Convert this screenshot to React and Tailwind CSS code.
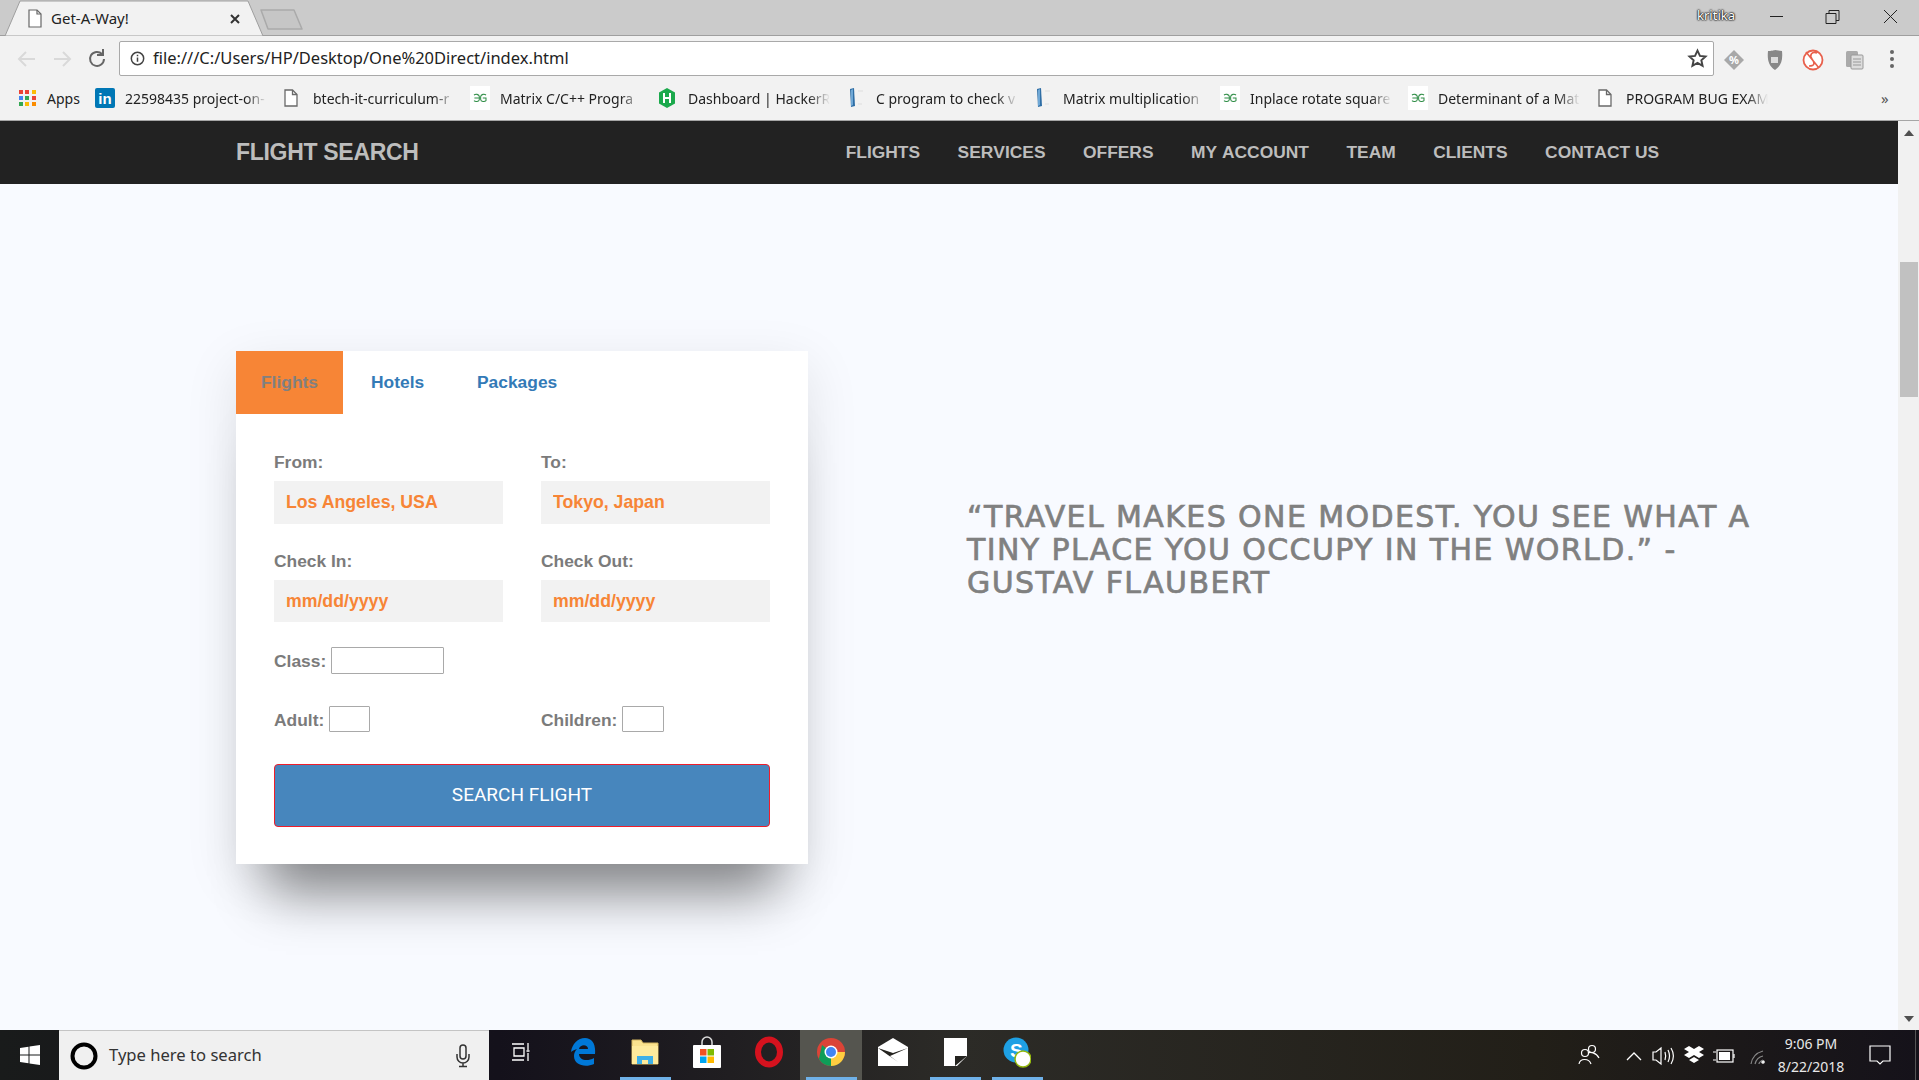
import React from "react";

const ui = { fontFamily: '"Noto Sans", "Open Sans", sans-serif' };

function Doc({ className = "" }) {
  return (
    <svg viewBox="0 0 14 18" className={className} fill="none" stroke="#6a6a6a" strokeWidth="1.3">
      <path d="M1 1h7.5L13 5.5V17H1z" fill="#fff" />
      <path d="M8.5 1v4.5H13" />
    </svg>
  );
}

function GG() {
  return (
    <div className="w-[20px] h-[24px] bg-white flex items-center justify-center shrink-0">
      <svg viewBox="0 0 20 12" className="w-[16px] h-[10px]" fill="none" stroke="#2f8d46" strokeWidth="1.3">
        <path d="M2.500 2.500C4 .8 9 .8 9.200 4.500v3C9 11 4 11 2.500 9.300M3 6h6.200" />
        <path d="M17.500 2.500C16 .8 11 .8 10.800 4.500v3c.2 3.500 5.200 3.500 6.700 1.800V6h-4" />
      </svg>
    </div>
  );
}

function AppsIcon() {
  const c = ["#ea4335", "#ea4335", "#fbbc05", "#4285f4", "#34a853", "#ea4335", "#34a853", "#fbbc05", "#fb8c00"];
  return (
    <div className="grid grid-cols-3 gap-[2px] w-[17px] h-[17px] shrink-0">
      {c.map((k, i) => (
        <div key={i} style={{ background: k }} className="w-[4px] h-[4px]" />
      ))}
    </div>
  );
}

function LinkedIn() {
  return (
    <div className="w-[20px] h-[20px] rounded-[2px] bg-[#0077b5] flex items-end justify-center shrink-0 text-white font-bold text-[15px] leading-[18px]" style={{ fontFamily: '"Liberation Sans", sans-serif' }}>
      in
    </div>
  );
}

function HR() {
  return (
    <svg viewBox="0 0 18 20" className="w-[18px] h-[20px] shrink-0">
      <path d="M9 0l8 4.5v11L9 20l-8-4.5v-11z" fill="#1ba94c" />
      <path d="M6 5v10M12 5v10M6 10h6" stroke="#fff" strokeWidth="2" />
    </svg>
  );
}

function Blur() {
  return (
    <svg viewBox="0 0 18 24" className="w-[18px] h-[24px] shrink-0">
      <path d="M4 3l4-1 1 18-4 1z" fill="#2f6ea5" />
      <path d="M5 4l2-1v16l-2 1z" fill="#6fa8d6" />
      <path d="M12 5h5M12 18h4" stroke="#e8e8e8" strokeWidth="2" />
    </svg>
  );
}

function Bookmark({ icon, text, w, iconW = 30 }) {
  return (
    <div className="flex items-center shrink-0" style={{ width: w }}>
      <div className="flex items-center shrink-0" style={{ width: iconW }}>{icon}</div>
      <span className="w-[142px] whitespace-nowrap overflow-hidden text-[14px] text-[#222] [mask-image:linear-gradient(to_right,black_85%,transparent_100%)]">
        {text}
      </span>
    </div>
  );
}

function Browser() {
  return (
    <header style={ui} className="shrink-0">
      {/* tab strip */}
      <div className="h-[36px] bg-[#cbcbcb] border-b border-[#9f9f9f] flex items-start">
        <svg viewBox="0 0 310 36" className="w-[310px] h-[36px] shrink-0">
          <path d="M5 36L20 1h228l15 35z" fill="#f2f2f2" stroke="#9f9f9f" />
          <path d="M261 10h33l8 19h-34z" fill="#c6c6c6" stroke="#aaaaaa" strokeWidth="1.5" strokeLinejoin="round" />
          <path d="M29 10h8l4 4v13H29z" fill="#fff" stroke="#666" strokeWidth="1.2" />
          <path d="M37 10v4h4" fill="none" stroke="#666" strokeWidth="1.2" />
          <path d="M231 15l8 8M239 15l-8 8" stroke="#333" strokeWidth="2" />
        </svg>
        <span className="-ml-[259px] mt-[8px] text-[15px] leading-[20px] text-[#222]">Get-A-Way!</span>
        <div className="ml-auto flex items-center h-[32px]">
          <span className="text-[13px] text-white [text-shadow:0_0_2px_#000,0_0_2px_#000,0_0_1px_#000]">kritika</span>
          <svg viewBox="0 0 184 32" className="w-[184px] h-[32px]" fill="none" stroke="#222" strokeWidth="1">
            <path d="M35 16.5h13" />
            <path d="M91 13.500h10v10H91zM94 13.500v-3h10v10h-3" />
            <path d="M149 10l13 13M162 10l-13 13" />
          </svg>
        </div>
      </div>
      {/* toolbar */}
      <div className="h-[40px] bg-[#f2f2f2] flex items-center pt-[5px]">
        <svg viewBox="0 0 119 34" className="w-[119px] h-[34px] shrink-0" fill="none" strokeWidth="2">
          <path d="M35 17H20M26 10l-7 7 7 7" stroke="#d9d9d9" />
          <path d="M54 17h15M63 10l7 7-7 7" stroke="#d9d9d9" />
          <path d="M104 17a7 7 0 1 1-2-5M103 7v6h-6" stroke="#666" />
        </svg>
        <div className="h-[35px] w-[1595px] bg-white border border-[#a9a9a9] rounded-[2px] flex items-center shrink-0">
          <svg viewBox="0 0 16 16" className="w-[15px] h-[15px] ml-[10px] shrink-0" fill="none" stroke="#444" strokeWidth="1.6">
            <circle cx="8" cy="8" r="6.6" />
            <path d="M8 7v4.5M8 4v1.6" />
          </svg>
          <span className="ml-[8px] text-[16.5px] text-[#222] whitespace-nowrap">file:///C:/Users/HP/Desktop/One%20Direct/index.html</span>
          <svg viewBox="0 0 24 24" className="w-[21px] h-[21px] ml-auto mr-[5px]" fill="none" stroke="#444" strokeWidth="2.2">
            <path d="M12 3l2.8 6 6.4.7-4.8 4.3 1.4 6.4L12 17l-5.8 3.4 1.4-6.4L2.800 9.700 9.200 9z" />
          </svg>
        </div>
        <svg viewBox="0 0 205 34" className="w-[205px] h-[34px]">
          <path d="M20 8l10 10-10 10-10-10z" fill="#a8a8a8" />
          <text x="15" y="22" fontSize="11" fontWeight="700" fill="#fff">%</text>
          <path d="M55 9c3 0 6-1 6-1l7 1c1 9-1 15-7 19-6-4-8-10-7-19z" fill="#888" />
          <rect x="57" y="15" width="7" height="6" fill="#ddd" />
          <circle cx="99" cy="18" r="9.500" fill="#fff" stroke="#e8604c" strokeWidth="1.8" />
          <path d="M103 11c-5-2-8 2-5 6s3 7-3 7M92 10l13 16" fill="none" stroke="#e8604c" strokeWidth="1.600" />
          <rect x="132" y="9" width="12" height="16" rx="1.500" fill="#aaa" />
          <rect x="137" y="13" width="12" height="14" rx="1" fill="#ddd" stroke="#999" />
          <path d="M139 17h8M139 20h8M139 23h8" stroke="#999" />
          <circle cx="178" cy="10" r="2" fill="#666" />
          <circle cx="178" cy="17" r="2" fill="#666" />
          <circle cx="178" cy="24" r="2" fill="#666" />
        </svg>
      </div>
      {/* bookmarks */}
      <div className="h-[45px] bg-[#f2f2f2] border-b border-[#a6a6a6] flex items-center pl-[19px]">
        <div className="w-[76px] shrink-0 flex items-center gap-[11px]">
          <AppsIcon />
          <span className="text-[14px] text-[#222]">Apps</span>
        </div>
        <Bookmark w={189} icon={<LinkedIn />} text="22598435 project-on-" />
        <Bookmark w={186} iconW={29} icon={<Doc className="w-[14px] h-[18px]" />} text="btech-it-curriculum-r" />
        <Bookmark w={188} icon={<GG />} text="Matrix C/C++ Progra" />
        <Bookmark w={188} icon={<HR />} text="Dashboard | HackerR" />
        <Bookmark w={187} icon={<Blur />} text="C program to check v" />
        <Bookmark w={187} icon={<Blur />} text="Matrix multiplication" />
        <Bookmark w={188} icon={<GG />} text="Inplace rotate square" />
        <Bookmark w={190} icon={<GG />} text="Determinant of a Mat" />
        <Bookmark w={286} iconW={28} icon={<Doc className="w-[14px] h-[18px]" />} text="PROGRAM BUG EXAM" />
        <span className="-ml-[3px] text-[15px] text-[#555]">»</span>
      </div>
    </header>
  );
}

const links = ["FLIGHTS", "SERVICES", "OFFERS", "MY ACCOUNT", "TEAM", "CLIENTS", "CONTACT US"];

function Nav() {
  return (
    <nav className="h-[63px] bg-[#222222] flex items-center pl-[236px] text-[#bdbdbd] font-bold shrink-0">
      <span className="text-[23px] tracking-[-0.3px] whitespace-nowrap">FLIGHT SEARCH</span>
      <div className="flex gap-[37.5px] ml-[427px] text-[17.4px] [font-kerning:none]">
        {links.map((l) => (
          <span key={l} className="whitespace-nowrap">{l}</span>
        ))}
      </div>
    </nav>
  );
}

function Field({ label, value, h }) {
  return (
    <div>
      <div className="h-[24px] leading-[26px] mb-[8px] text-[#7b7b7b]">{label}</div>
      <input readOnly value={value} className={`${h} w-full bg-[#f2f2f2] pl-[12px] text-[#f78536] text-[17.7px] outline-none font-bold`} />
    </div>
  );
}

function Card() {
  return (
    <section className="w-[572px] h-[513px] bg-white mt-[167px] ml-[236px] shrink-0 text-[17.4px] font-bold shadow-[0_62px_50px_-32px_rgba(0,0,0,0.42),0_15px_50px_rgba(0,0,0,0.1)]">
      <div className="flex h-[63px] items-center">
        <div className="w-[107px] h-full bg-[#f78536] text-[#808080] flex items-center justify-center">Flights</div>
        <div className="w-[134px] pl-[28px] text-[#337ab7]">Hotels</div>
        <div className="text-[#337ab7]">Packages</div>
      </div>
      <div className="px-[38px] pt-[35px]">
        <div className="grid grid-cols-2 gap-x-[38px] gap-y-[25px]">
          <Field label="From:" value="Los Angeles, USA" h="h-[43px]" />
          <Field label="To:" value="Tokyo, Japan" h="h-[43px]" />
          <div className="-mt-px"><Field label="Check In:" value="mm/dd/yyyy" h="h-[42px]" /></div>
          <div className="-mt-px"><Field label="Check Out:" value="mm/dd/yyyy" h="h-[42px]" /></div>
        </div>
        <div className="flex items-center h-[27px] mt-[25px] gap-[5px] text-[#7b7b7b]">
          <span className="pt-[2px]">Class:</span>
          <input readOnly className="w-[113px] h-[27px] border border-[#a9a9a9] rounded-[1px] bg-white" />
        </div>
        <div className="grid grid-cols-2 gap-x-[38px] mt-[32px] text-[#7b7b7b]">
          <div className="flex items-center h-[26px] gap-[5px]">
            <span className="pt-[2px]">Adult:</span>
            <input readOnly className="w-[41px] h-[26px] border border-[#a9a9a9] rounded-[1px] bg-white" />
          </div>
          <div className="flex items-center h-[26px] gap-[5px]">
            <span className="pt-[2px]">Children:</span>
            <input readOnly className="w-[42px] h-[26px] border border-[#a9a9a9] rounded-[1px] bg-white" />
          </div>
        </div>
        <button className="w-full h-[63px] mt-[32px] bg-[#4786bd] border border-[#f01d2a] rounded-[4px] text-white font-normal text-[19px]" style={{ fontFamily: "Roboto, sans-serif" }}>
          SEARCH FLIGHT
        </button>
      </div>
    </section>
  );
}

function Quote() {
  return (
    <blockquote className="ml-[159px] mt-[316px] w-[800px] text-[30px] leading-[33px] text-[#808080] tracking-[1.4px] [-webkit-text-stroke:0.7px_#808080] whitespace-nowrap" style={{ fontFamily: '"DejaVu Sans", sans-serif' }}>
      “TRAVEL MAKES ONE MODEST. YOU SEE WHAT A
      <br />
      TINY PLACE YOU OCCUPY IN THE WORLD.” -
      <br />
      GUSTAV FLAUBERT
    </blockquote>
  );
}

function Scrollbar() {
  return (
    <div className="w-[21px] bg-[#f1f1f1] flex flex-col items-center shrink-0">
      <svg viewBox="0 0 10 6" className="w-[10px] h-[6px] mt-[9px] shrink-0"><path d="M5 0l5 6H0z" fill="#505050" /></svg>
      <div className="w-[18px] h-[135px] bg-[#c1c1c1] mt-[126px] shrink-0" />
      <svg viewBox="0 0 10 6" className="w-[10px] h-[6px] mt-auto mb-[8px] shrink-0"><path d="M5 6l5-6H0z" fill="#505050" /></svg>
    </div>
  );
}

function TaskIcon({ children, bar, active }) {
  return (
    <div className={`w-[62px] h-full flex flex-col items-center relative ${active ? "bg-[#55554f]" : ""}`}>
      <div className="flex-1 flex items-center justify-center pb-[3px]">{children}</div>
      <div className={`h-[3px] w-[51px] ${bar ? "bg-[#6fb1e8]" : "bg-transparent"}`} />
    </div>
  );
}

function Taskbar() {
  return (
    <footer style={ui} className="h-[50px] shrink-0 flex text-white bg-[linear-gradient(to_right,#191b1b_0%,#14111b_26%,#2c2b27_50%,#221f18_80%,#15121a_100%)]">
      <div className="w-[59px] flex items-center justify-center shrink-0">
        <svg viewBox="0 0 20 20" className="w-[20px] h-[20px]" fill="#fff">
          <path d="M0 3l8.500-1.200v7.700H0zM9.500 1.600L20 0v9.500H9.500zM0 10.500h8.500v7.700L0 17zM9.500 10.500H20V20L9.500 18.400z" />
        </svg>
      </div>
      <div className="w-[430px] bg-[#f0f0f0] border-t border-[#c4c4c4] flex items-center shrink-0 text-[#333]">
        <svg viewBox="0 0 30 30" className="w-[30px] h-[30px] ml-[10px]">
          <circle cx="15" cy="15" r="11.500" fill="none" stroke="#000" strokeWidth="4" />
        </svg>
        <span className="ml-[10px] text-[16.6px]">Type here to search</span>
        <svg viewBox="0 0 16 24" className="w-[16px] h-[24px] ml-auto mr-[18px]" fill="none" stroke="#333" strokeWidth="1.500">
          <rect x="5" y="1" width="6" height="14" rx="3" />
          <path d="M2 10v3a6 6 0 0 0 12 0v-3M8 19v3M4 22.500h8" />
        </svg>
      </div>
      <div className="flex h-full shrink-0 ml-[1px]">
        <TaskIcon>
          <svg viewBox="0 0 20 20" className="w-[20px] h-[20px]" fill="none" stroke="#fff" strokeWidth="1.300">
            <path d="M1 2h12M3 6h10v8H3zM1 18h12M3 14v0M17 1v7M17 11v8M15.500 9h3" />
          </svg>
        </TaskIcon>
        <TaskIcon>
          <svg viewBox="0 0 26 28" className="w-[26px] h-[28px]">
            <path d="M1 14C2 6 8 0 15 0c7 0 11 6 10 16H9c0 6 8 8 15 4v6c-9 4-20 1-20-8 0-3 1-5 3-7-3 1-5 2-6 3zM9 11h9c0-5-8-5-9 0z" fill="#0078d7" />
          </svg>
        </TaskIcon>
        <TaskIcon bar>
          <svg viewBox="0 0 28 26" className="w-[28px] h-[26px]">
            <path d="M1 1h9l2 3h15v21H1z" fill="#fbe38e" stroke="#d5b660" />
            <rect x="1" y="7" width="26" height="18" fill="#ffeb9c" />
            <path d="M6 17h16v8h-5v-4h-6v4H6z" fill="#3fb0e8" />
          </svg>
        </TaskIcon>
        <TaskIcon>
          <svg viewBox="0 0 28 32" className="w-[28px] h-[32px]">
            <path d="M9 9V6a5 5 0 0 1 10 0v3" fill="none" stroke="#ddd" strokeWidth="1.500" />
            <rect y="9" width="28" height="23" rx="1" fill="#fff" />
            <rect x="7" y="13" width="6.500" height="6.500" fill="#f25022" />
            <rect x="14.500" y="13" width="6.500" height="6.500" fill="#7fba00" />
            <rect x="7" y="20.500" width="6.500" height="6.500" fill="#00a4ef" />
            <rect x="14.500" y="20.500" width="6.500" height="6.500" fill="#ffb900" />
          </svg>
        </TaskIcon>
        <TaskIcon>
          <svg viewBox="0 0 28 32" className="w-[28px] h-[32px]">
            <ellipse cx="14" cy="16" rx="11" ry="12.500" fill="none" stroke="#d5121e" strokeWidth="6" />
          </svg>
        </TaskIcon>
        <TaskIcon bar active>
          <svg viewBox="0 0 28 28" className="w-[28px] h-[28px]">
            <circle cx="14" cy="14" r="14" fill="#db4437" />
            <path d="M14 14L26.100 21A14 14 0 0 1 14 28 14 14 0 0 1 1.900 21L5 7z" fill="#0f9d58" />
            <path d="M14 14h14A14 14 0 0 1 14 28z" fill="#ffcd40" />
            <circle cx="14" cy="14" r="6.500" fill="#fff" />
            <circle cx="14" cy="14" r="5" fill="#4285f4" />
          </svg>
        </TaskIcon>
        <TaskIcon>
          <svg viewBox="0 0 30 28" className="w-[30px] h-[28px]">
            <path d="M0 9L15 0l15 9v19H0z" fill="#fff" />
            <path d="M0 10l15 5 15-5-18 8 8 6z" fill="#24231f" />
          </svg>
        </TaskIcon>
        <TaskIcon bar>
          <svg viewBox="0 0 23 28" className="w-[23px] h-[28px]">
            <path d="M0 0h23v18L13 28H0z" fill="#fff" />
            <path d="M11 28V18h12z" fill="#24231f" />
          </svg>
        </TaskIcon>
        <TaskIcon bar>
          <svg viewBox="0 0 28 32" className="w-[28px] h-[32px]">
            <circle cx="13" cy="14" r="12.500" fill="#1ea0e4" />
            <text x="7" y="21" fontSize="19" fontWeight="700" fill="#fff" fontFamily="Liberation Sans">S</text>
            <circle cx="20" cy="23" r="8" fill="#fff" stroke="#93b80c" strokeWidth="1.500" />
          </svg>
        </TaskIcon>
      </div>
      <div className="flex-1 flex items-center pl-[528px] h-full">
        <svg viewBox="0 0 190 30" className="w-[190px] h-[30px] shrink-0" fill="none" stroke="#fff" strokeWidth="1.200">
          <circle cx="16" cy="9" r="3.500" />
          <circle cx="9" cy="13" r="3.500" />
          <path d="M3 24c1-6 10-6 12 0M12 13c2-1 8-1 11 5" />
          <path d="M51 20l7-7 7 7" strokeWidth="1.300" />
          <path d="M77 12h3l5-4v16l-5-4h-3zM89 12c1 3 1 5 0 8M92 10c2 4 2 8 0 12M95 8c3 5 3 11 0 16" />
          <path d="M108 9l5-3 5 3 5-3 5 3-5 3 5 3-5 3-5-3-5 3-5-3 5-3zM113 20l5 3 5-3-5-3z" fill="#fff" stroke="none" />
          <path d="M140 12h-3M140 20h-3" strokeWidth="1" />
          <rect x="141" y="10" width="16" height="12" />
          <rect x="143" y="12" width="11" height="8" fill="#fff" stroke="none" />
          <path d="M158 14v4" />
          <circle cx="187" cy="22" r="1.200" fill="#bbb" />
          <path d="M175 24c1-7 5-11 12-13M179 24c1-4 3-7 8-8M183 24c0-2 2-3 4-4" stroke="#888" />
        </svg>
        <div className="w-[80px] ml-[5px] text-center text-[14px] leading-[23px] shrink-0 text-[#e8e8e8]">
          <div>9:06 PM</div>
          <div>8/22/2018</div>
        </div>
        <svg viewBox="0 0 22 20" className="w-[22px] h-[20px] ml-[18px] shrink-0" fill="none" stroke="#fff" strokeWidth="1.200">
          <path d="M1 1h20v15h-7l-3 3-3-3H1z" />
        </svg>
        <div className="w-px h-[50px] bg-[#555] ml-[24px] shrink-0" />
      </div>
    </footer>
  );
}

export default function App() {
  return (
    <div className="w-[1919px] h-[1080px] overflow-hidden flex flex-col bg-[#f8faff]" style={{ fontFamily: '"Liberation Sans", Arial, sans-serif' }}>
      <Browser />
      <div className="flex-1 flex min-h-0">
        <div className="flex-1 flex flex-col min-w-0">
          <Nav />
          <main className="flex-1 flex min-h-0 bg-[#f8faff]">
            <Card />
            <Quote />
          </main>
        </div>
        <Scrollbar />
      </div>
      <Taskbar />
    </div>
  );
}
